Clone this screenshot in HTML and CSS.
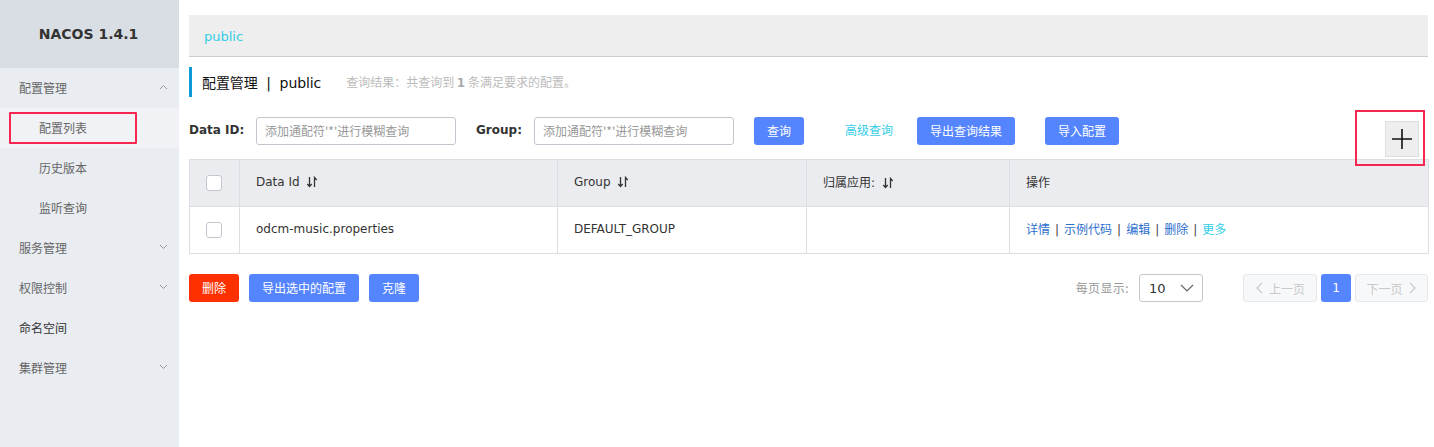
FILE: index.html
```html
<!DOCTYPE html>
<html>
<head>
<meta charset="utf-8">
<link rel="stylesheet" href="styles.css">
</head>
<body>
<div class="app">
  <aside class="sidebar">
    <div class="logo">NACOS 1.4.1</div>
    <div class="menu-item group"><span>配置管理</span><svg class="chev" width="9" height="6" viewBox="0 0 9 6"><path d="M1 5 L4.5 1.5 L8 5" fill="none" stroke="#999" stroke-width="1"/></svg></div>
    <div class="menu-item sub active"><span>配置列表</span><div class="mark"></div></div>
    <div class="menu-item sub"><span>历史版本</span></div>
    <div class="menu-item sub"><span>监听查询</span></div>
    <div class="menu-item group"><span>服务管理</span><svg class="chev" width="9" height="6" viewBox="0 0 9 6"><path d="M1 1 L4.5 4.5 L8 1" fill="none" stroke="#999" stroke-width="1"/></svg></div>
    <div class="menu-item group"><span>权限控制</span><svg class="chev" width="9" height="6" viewBox="0 0 9 6"><path d="M1 1 L4.5 4.5 L8 1" fill="none" stroke="#999" stroke-width="1"/></svg></div>
    <div class="menu-item leaf"><span>命名空间</span></div>
    <div class="menu-item group"><span>集群管理</span><svg class="chev" width="9" height="6" viewBox="0 0 9 6"><path d="M1 1 L4.5 4.5 L8 1" fill="none" stroke="#999" stroke-width="1"/></svg></div>
  </aside>
  <main class="main">
    <div class="crumb"><span class="crumb-link">public</span></div>
    <div class="title">
      <span class="title-text">配置管理 &nbsp;|&nbsp; public</span>
      <span class="summary">查询结果：共查询到 <b>1</b> 条满足要求的配置。</span>
    </div>
    <div class="search">
      <label class="lbl lbl-id">Data ID:</label>
      <div class="input">添加通配符'*'进行模糊查询</div>
      <label class="lbl lbl-group">Group:</label>
      <div class="input">添加通配符'*'进行模糊查询</div>
      <button class="btn primary b-query">查询</button>
      <span class="adv">高级查询</span>
      <button class="btn primary b-export">导出查询结果</button>
      <button class="btn primary b-import">导入配置</button>
      <div class="plus-wrap">
        <button class="plus"><svg width="22" height="22" viewBox="0 0 22 22"><path d="M11 1 V21 M1 11 H21" stroke="#111" stroke-width="1.6"/></svg></button>
        <div class="plus-mark"></div>
      </div>
    </div>
    <table class="grid">
      <colgroup><col class="c1"><col class="c2"><col class="c3"><col class="c4"><col class="c5"></colgroup>
      <thead>
        <tr>
          <th class="chk"><span class="cb"></span></th>
          <th>Data Id <svg class="sort" width="12" height="12" viewBox="0 0 12 12"><path d="M3.5 1 V10.5 M1.3 8 L3.5 10.5 L5.7 8 M8.5 11 V1.5 L10.7 4" fill="none" stroke="#333" stroke-width="1.3"/></svg></th>
          <th>Group <svg class="sort" width="12" height="12" viewBox="0 0 12 12"><path d="M3.5 1 V10.5 M1.3 8 L3.5 10.5 L5.7 8 M8.5 11 V1.5 L10.7 4" fill="none" stroke="#333" stroke-width="1.3"/></svg></th>
          <th>归属应用: <svg class="sort" width="12" height="12" viewBox="0 0 12 12"><path d="M3.5 1 V10.5 M1.3 8 L3.5 10.5 L5.7 8 M8.5 11 V1.5 L10.7 4" fill="none" stroke="#333" stroke-width="1.3"/></svg></th>
          <th>操作</th>
        </tr>
      </thead>
      <tbody>
        <tr>
          <td class="chk"><span class="cb"></span></td>
          <td>odcm-music.properties</td>
          <td>DEFAULT_GROUP</td>
          <td></td>
          <td class="ops"><a>详情</a><i>|</i><a>示例代码</a><i>|</i><a>编辑</a><i>|</i><a>删除</a><i>|</i><a class="more">更多</a></td>
        </tr>
      </tbody>
    </table>
    <div class="footer">
      <button class="btn danger b-del">删除</button>
      <button class="btn primary b-expsel">导出选中的配置</button>
      <button class="btn primary b-clone">克隆</button>
      <div class="pager">
        <span class="per">每页显示:</span>
        <div class="select"><span>10</span><svg width="14" height="8" viewBox="0 0 14 8"><path d="M1 1 L7 7 L13 1" fill="none" stroke="#666" stroke-width="1.2"/></svg></div>
        <button class="pg prev"><svg width="8" height="12" viewBox="0 0 8 12"><path d="M7 1 L2 6 L7 11" fill="none" stroke="#ccc" stroke-width="1.3"/></svg>上一页</button>
        <button class="pg cur">1</button>
        <button class="pg next">下一页<svg width="8" height="12" viewBox="0 0 8 12"><path d="M1 1 L6 6 L1 11" fill="none" stroke="#ccc" stroke-width="1.3"/></svg></button>
      </div>
    </div>
  </main>
</div>
</body>
</html>
```

FILE: styles.css
```css
* { box-sizing: border-box; }
html, body { margin: 0; padding: 0; }
body {
  width: 1434px;
  height: 447px;
  overflow: hidden;
  background: #fff;
  font-family: "DejaVu Sans", "Noto Sans CJK SC", sans-serif;
  font-size: 12px;
  color: #333;
}
.app { display: flex; height: 447px; }

.sidebar {
  width: 179px;
  flex: none;
  background: #e9ecf1;
  height: 100%;
}
.logo {
  height: 68px;
  background: #d9dde4;
  display: flex;
  align-items: center;
  justify-content: center;
  font-weight: bold;
  font-size: 14px;
  color: #333;
  padding-right: 2px;
}
.menu-item {
  height: 40px;
  display: flex;
  align-items: center;
  padding-left: 19px;
  padding-right: 11px;
  padding-bottom: 2px;
  color: #666;
  font-size: 12px;
  position: relative;
}
.menu-item span { font-family: "Noto Sans CJK SC", sans-serif; }
.menu-item .chev { margin-left: auto; }
.menu-item.sub { padding-left: 39px; }
.menu-item.active { background: #f1f2f6; }
.menu-item.leaf { color: #333; }
.mark {
  position: absolute;
  left: 9px;
  top: 4px;
  width: 128px;
  height: 32px;
  border: 2.5px solid #f5264f;
  border-radius: 1px;
}

.main {
  flex: 1;
  padding: 15px 6px 0 10px;
  min-width: 0;
}
.crumb {
  height: 42px;
  background: #eeeeee;
  border-bottom: 1px solid #cccccc;
  display: flex;
  align-items: center;
  padding-left: 15px;
  padding-top: 1px;
}
.crumb-link { color: #33cde5; font-size: 13px; }

.title {
  margin-top: 10px;
  height: 30px;
  border-left: 3px solid #0b9bd7;
  display: flex;
  align-items: center;
  padding-left: 10px;
  padding-bottom: 1px;
}
.title-text {
  font-size: 14px;
  color: #111;
  letter-spacing: -0.1px;
  font-family: "DejaVu Sans", "Noto Sans CJK SC", sans-serif;
}
.summary {
  margin-left: 25px;
  color: #bbb;
  font-size: 12px;
  font-family: "Noto Sans CJK SC", sans-serif;
}
.summary b { color: #aaa; font-family: "DejaVu Sans", sans-serif; }

.search {
  margin-top: 20px;
  display: flex;
  align-items: flex-start;
  height: 40px;
}
.lbl {
  font-weight: bold;
  font-size: 12px;
  color: #333;
  height: 28px;
  line-height: 27px;
}
.lbl-id { width: 67px; }
.lbl-group { width: 58px; margin-left: 20px; }
.input {
  width: 200px;
  height: 28px;
  border: 1px solid #c4c6cf;
  border-radius: 3px;
  color: #999;
  font-family: "Noto Sans CJK SC", sans-serif;
  font-size: 12px;
  line-height: 25px;
  padding-left: 8px;
}
.btn {
  height: 28px;
  border: none;
  border-radius: 3px;
  font-family: "Noto Sans CJK SC", sans-serif;
  font-size: 12px;
  color: #fff;
  padding: 0 0 2px;
  cursor: pointer;
}
.primary { background: #5584ff; }
.danger { background: #ff3000; }
.b-query { width: 50px; margin-left: 20px; }
.adv {
  margin-left: 41px;
  width: 72px;
  color: #33cde5;
  font-family: "Noto Sans CJK SC", sans-serif;
  font-size: 12px;
  height: 28px;
  line-height: 26px;
}
.b-export { width: 98px; }
.b-import { width: 74px; margin-left: 30px; }
.plus-wrap {
  margin-left: auto;
  margin-right: 9px;
  margin-top: 4px;
  position: relative;
}
.plus {
  width: 34px;
  height: 36px;
  background: #eeeeee;
  border: 1px solid #dddddd;
  padding: 0;
  display: flex;
  align-items: center;
  justify-content: center;
}
.plus-mark {
  position: absolute;
  left: -30px;
  top: -11px;
  width: 70px;
  height: 56px;
  border: 2.5px solid #f5264f;
}

.grid {
  margin-top: 2px;
  width: 1239px;
  border-collapse: collapse;
  table-layout: fixed;
  border: 1px solid #dcdee3;
}
.c1 { width: 50px; }
.c2 { width: 318px; }
.c3 { width: 249px; }
.c4 { width: 203px; }
.c5 { width: 419px; }
.grid th, .grid td {
  height: 47px;
  border: 1px solid #dcdee3;
  text-align: left;
  padding: 0 0 3px 16px;
  font-weight: normal;
  font-size: 12px;
  color: #333;
  font-family: "DejaVu Sans", "Noto Sans CJK SC", sans-serif;
}
.grid th { background: #ebecf0; }
.grid td { background: #fff; }
.grid .chk { padding-left: 16px; padding-bottom: 0; }
.cb {
  display: inline-block;
  width: 16px;
  height: 16px;
  border: 1px solid #c4c6cf;
  border-radius: 3px;
  background: #fff;
  vertical-align: middle;
}
.sort { vertical-align: -2px; margin-left: 3px; }
.ops a { color: #2c6fce; font-family: "Noto Sans CJK SC", sans-serif; }
.ops a.more { color: #33cde5; }
.ops i { font-style: normal; color: #444; margin: 0 5px; }
.grid td.ops { padding-bottom: 4px; }

.footer {
  margin-top: 20px;
  display: flex;
  align-items: center;
  height: 28px;
}
.b-del { width: 50px; }
.b-expsel { width: 110px; margin-left: 10px; }
.b-clone { width: 50px; margin-left: 10px; }
.pager {
  margin-left: auto;
  display: flex;
  align-items: center;
}
.per {
  color: #999;
  font-family: "Noto Sans CJK SC", sans-serif;
  font-size: 12px;
  margin-right: 10px;
  padding-bottom: 2px;
  letter-spacing: 0.4px;
}
.select {
  width: 64px;
  height: 28px;
  border: 1px solid #c4c6cf;
  border-radius: 3px;
  display: flex;
  align-items: center;
  justify-content: space-between;
  padding: 0 8px 0 9px;
  font-size: 13px;
  color: #333;
}
.pg {
  height: 28px;
  border-radius: 3px;
  font-family: "Noto Sans CJK SC", sans-serif;
  font-size: 12px;
  padding: 0;
  display: flex;
  align-items: center;
  justify-content: center;
  gap: 6px;
}
.prev, .next {
  width: 74px;
  background: #f7f8fa;
  border: 1px solid #e6e7eb;
  color: #c8c8c8;
}
.prev { margin-left: 40px; }
.cur {
  width: 30px;
  margin: 0 4px;
  background: #5584ff;
  border: none;
  color: #fff;
  font-family: "DejaVu Sans", sans-serif;
}
.next { width: 73px; }
```
